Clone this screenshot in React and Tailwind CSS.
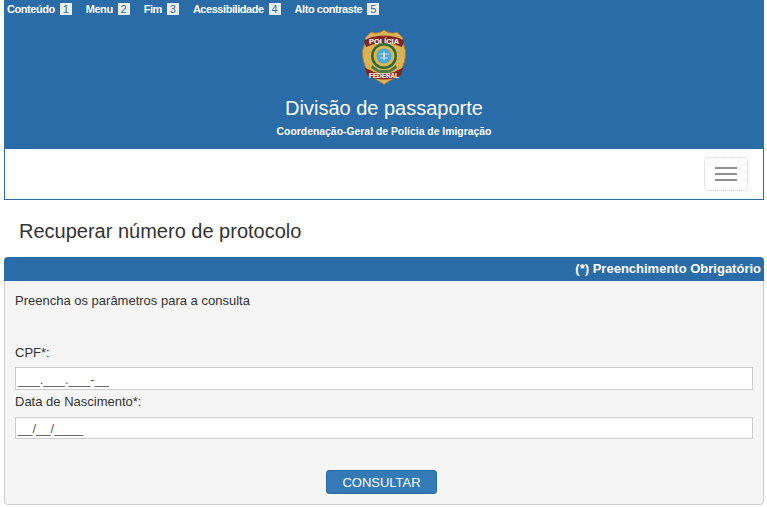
const Key = ({ label, n }) => (
  <span className="flex items-center gap-[5px]">
    <span>{label}</span>
    <span className="bg-[#eeeeee] text-[#2a6ca8] font-normal tracking-normal w-[12px] h-[12px] flex items-center justify-center text-[11px] leading-none">{n}</span>
  </span>
);

const Badge = () => (
  <svg width="44" height="56" viewBox="0 0 44 56" aria-hidden="true">
    <path d="M22 1 C26 4 31 5 35 3 L41 9 C39 13 43 17 43.5 22 C44 33 40 42 33 48 C29 52 25 53 22 55.5 C19 53 15 52 11 48 C4 42 0 33 0.5 22 C1 17 5 13 3 9 L9 3 C13 5 18 4 22 1 Z" fill="#dcb255" stroke="#9c7a3c" strokeWidth="1" />
    <path d="M2 12 C10 5 34 5 42 12 L40 18 L37 17 C30 13 14 13 7 17 L4 18 Z" fill="#7e2626" />
    <text x="22" y="15" textAnchor="middle" fontSize="8" fontWeight="700" textLength="30" lengthAdjust="spacingAndGlyphs" fill="#f7efe0" stroke="#f7efe0" strokeWidth="0.2" fontFamily="Liberation Sans, sans-serif">POLÍCIA</text>
    <circle cx="22" cy="27" r="13" fill="#2d6a3a" />
    <circle cx="22" cy="27" r="10.5" fill="#d9b64f" />
    <circle cx="22" cy="27" r="7.5" fill="#4aa8dc" />
    <path d="M22 21 L23 26 L22 33 L21 26 Z" fill="#f2f2f2" />
    <path d="M17 25 H27 M18 29 H26" stroke="#e8e8e8" strokeWidth="0.8" />
    <path d="M10 36 L17 41 L27 41 L34 36 L35 39 L27 44 L17 44 L9 39 Z" fill="#4f7a45" />
    <path d="M3 39 L8 41 C16 46 28 46 36 41 L41 39 L39 46 C30 52 14 52 5 46 Z" fill="#7e2626" />
    <text x="22" y="49" textAnchor="middle" fontSize="7.5" fontWeight="700" textLength="30" lengthAdjust="spacingAndGlyphs" fill="#f7efe0" stroke="#f7efe0" strokeWidth="0.2" fontFamily="Liberation Sans, sans-serif">FEDERAL</text>
  </svg>
);

export default function App() {
  return (
    <div className="min-h-[507px] bg-white pl-[4px] pr-[3px] font-['Liberation_Sans',Arial,sans-serif] text-[14px] text-[#333333] overflow-hidden">
      <header className="bg-[#2a6ca8] h-[149px] text-white flex flex-col">
        <nav className="flex h-[18px] items-center gap-[14px] pl-[3px] text-[11px] tracking-[-0.45px] font-bold leading-none">
          <Key label="Conteúdo" n="1" />
          <Key label="Menu" n="2" />
          <Key label="Fim" n="3" />
          <Key label="Acessibilidade" n="4" />
          <Key label="Alto contraste" n="5" />
        </nav>
        <div className="flex flex-col items-center">
          <div className="mt-[11px] h-[56px]"><Badge /></div>
          <h1 className="mt-[12px] text-[20px] leading-[22px] font-normal">Divisão de passaporte</h1>
          <p className="mt-[7px] text-[10.4px] leading-[12px] font-bold">Coordenação-Geral de Polícia de Imigração</p>
        </div>
      </header>
      <div className="h-[51px] bg-white border border-t-0 border-[#2a6ca8] flex items-center justify-end pr-[15px]">
        <button className="w-[44px] h-[34px] rounded-[4px] border border-dotted border-[#cccccc] flex flex-col items-center justify-center gap-[4px]">
          <span className="block w-[22px] h-[2px] bg-[#909090]" />
          <span className="block w-[22px] h-[2px] bg-[#909090]" />
          <span className="block w-[22px] h-[2px] bg-[#909090]" />
        </button>
      </div>
      <h2 className="mt-[20px] ml-[15px] text-[20px] leading-[22px] font-normal">Recuperar número de protocolo</h2>
      <section className="mt-[15px] rounded-[4px] overflow-hidden">
        <div className="h-[24px] bg-[#2a6ca8] text-white font-bold text-[13px] flex items-center justify-end pr-[3px]">(*) Preenchimento Obrigatório</div>
        <div className="h-[224px] bg-[#f5f5f5] border border-t-0 border-[#cccccc] rounded-b-[4px] px-[10px] text-[13px] flex flex-col">
          <p className="mt-[11px] leading-[17px]">Preencha os parâmetros para a consulta</p>
          <label className="mt-[35px] leading-[17px]">CPF*:</label>
          <div className="mt-[6px] h-[23px] bg-white border border-[#cccccc] text-[#555555] pl-[2px] leading-[23px]">___.___.___-__</div>
          <label className="mt-[3px] leading-[17px]">Data de Nascimento*:</label>
          <div className="mt-[7px] h-[22px] bg-white border border-[#cccccc] text-[#555555] pl-[2px] leading-[22px]">__/__/____</div>
          <div className="mt-[31px] flex justify-center pr-[5px]">
            <button className="w-[111px] h-[24px] rounded-[3px] bg-[#337ab7] border border-[#2e6da4] text-white text-[13px] leading-none">CONSULTAR</button>
          </div>
        </div>
      </section>
    </div>
  );
}
